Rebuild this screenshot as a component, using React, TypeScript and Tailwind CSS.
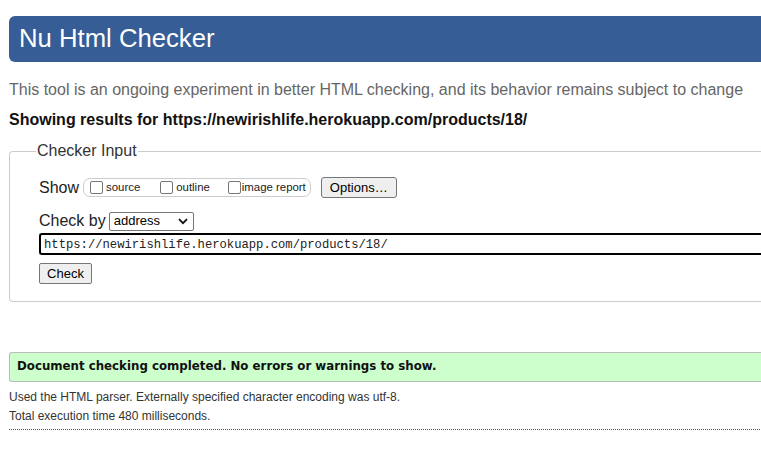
export default function App() {
  return (
    <div className="h-[455px] w-[761px] overflow-hidden bg-white">
      <main className="w-[900px] pl-[9px] pt-4 text-[#222] font-['Liberation_Sans',Arial,sans-serif]">
        <h1 className="flex h-[46px] items-center rounded-l-md bg-[#365d95] pl-[10px] text-[25.7px] leading-none text-white">
          Nu Html Checker
        </h1>
        <p className="mt-[18px] text-[16px] leading-[20px] text-[#666]">
          This tool is an ongoing experiment in better HTML checking, and its behavior remains subject to change
        </p>
        <p className="mt-[10px] text-[16px] font-bold leading-[20px] text-[#111]">
          Showing results for https://newirishlife.herokuapp.com/products/18/
        </p>

        <fieldset className="mt-[12px] h-[160px] rounded-l-[4px] border border-r-0 border-[#ccc] pl-[29px]">
          <legend className="-ml-[3px] px-[1px] text-[16px] leading-[18px] text-[#333]">Checker Input</legend>

          <div className="mt-[17px] flex items-center">
            <span className="text-[16px] leading-[20px] text-[#222]">Show</span>
            <div className="ml-[4px] flex h-[19px] items-center rounded-[7px] border border-[#ccc] pl-[6px] pr-[4px] text-[11.4px] text-[#222]">
              <label className="flex items-center">
                <span className="h-[13px] w-[13px] rounded-[2px] border border-[#767676] bg-white" />
                <span className="ml-[3px]">source</span>
              </label>
              <label className="ml-[20px] flex items-center">
                <span className="h-[13px] w-[13px] rounded-[2px] border border-[#767676] bg-white" />
                <span className="ml-[3px]">outline</span>
              </label>
              <label className="ml-[18px] flex items-center">
                <span className="h-[13px] w-[13px] rounded-[2px] border border-[#767676] bg-white" />
                <span className="ml-[1px]">image report</span>
              </label>
            </div>
            <button className="ml-[10px] h-[21px] w-[76px] rounded-[3px] border border-[#767676] bg-[#efefef] text-[13px] leading-none text-black">
              Options…
            </button>
          </div>

          <div className="mt-[13px] flex items-center">
            <span className="text-[16px] leading-[20px] text-[#222]">Check by</span>
            <div className="ml-[3px] flex h-[19px] w-[85px] items-center justify-between rounded-[2px] border border-[#767676] bg-white pl-[4px] pr-[5px] text-[13px] text-black">
              <span>address</span>
              <svg width="10" height="7" viewBox="0 0 10 7">
                <path d="M1 1.2 L5 5.2 L9 1.2" fill="none" stroke="#111" strokeWidth="1.8" />
              </svg>
            </div>
          </div>

          <div className="mt-[2px] flex h-[22px] items-center rounded-l-[3px] border-2 border-r-0 border-black pl-[3px] pt-[2px] font-['Liberation_Mono',monospace] text-[12.2px] text-[#222]">
            https://newirishlife.herokuapp.com/products/18/
          </div>

          <button className="mt-[8px] h-[21px] w-[53px] rounded-[2px] border border-[#767676] bg-[#efefef] text-[13px] leading-none text-black">
            Check
          </button>
        </fieldset>

        <div className="mt-[50px] flex h-[30px] items-center rounded-l-[3px] border border-r-0 border-[#bbb] bg-[#ccffcc] pl-[7px] font-['DejaVu_Sans',Verdana,sans-serif] text-[11.8px] font-bold text-[#111]">
          Document checking completed. No errors or warnings to show.
        </div>
        <p className="mt-[6px] text-[12px] leading-[19px] text-[#333]">
          Used the HTML parser. Externally specified character encoding was utf-8.
        </p>
        <p className="text-[12px] leading-[19px] text-[#333]">Total execution time 480 milliseconds.</p>
        <hr className="mt-[3px] border-0 border-t border-dotted border-[#555]" />
      </main>
    </div>
  );
}
